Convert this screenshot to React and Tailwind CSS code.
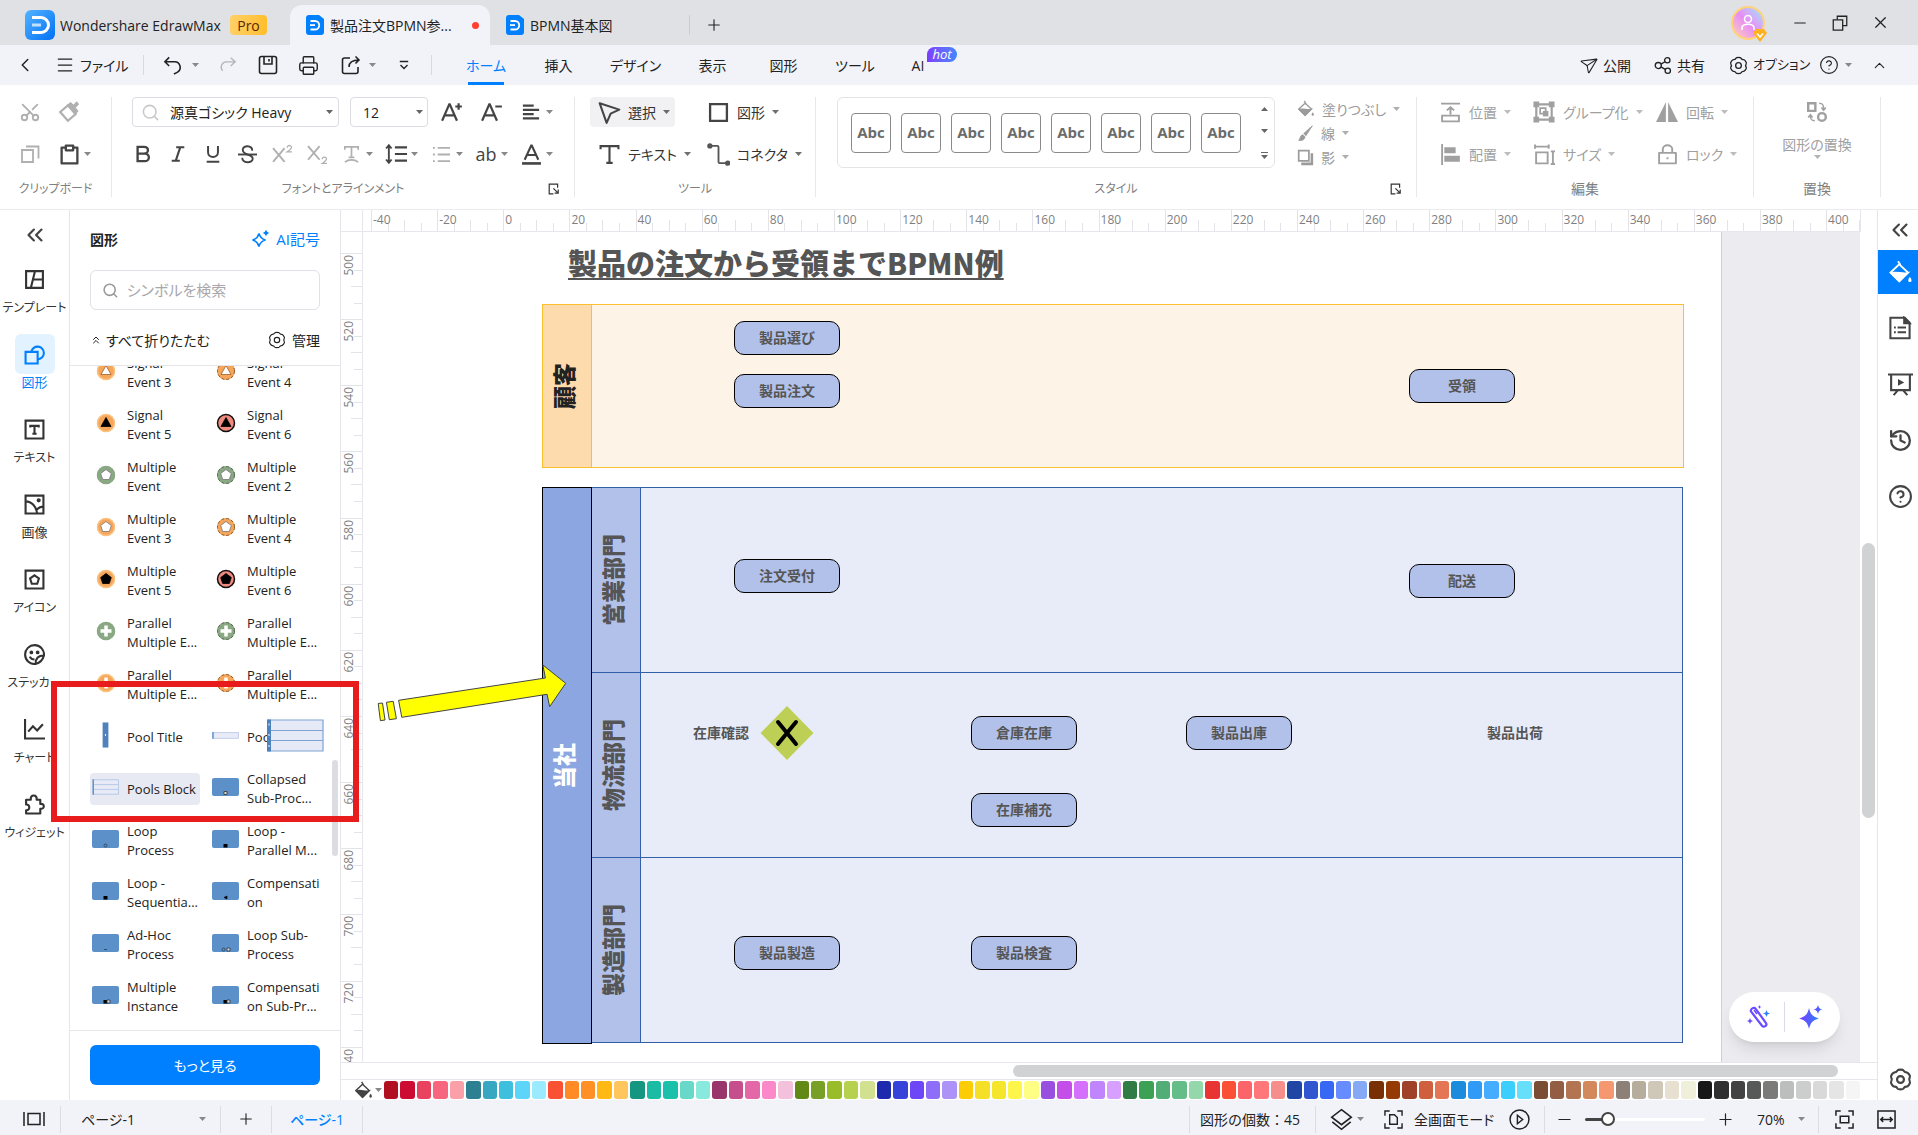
import React, { useState } from 'react';
import {
  Scissors,
  Undo2,
  Printer,
  Search,
  ChevronLeft,
  ChevronUp,
  ChevronsLeft,
  ChevronsUp,
  Menu,
  Minus,
  Plus,
  X,
  Send,
  Lock,
  CircleHelp,
  History,
} from 'lucide-react';

const PALETTE = [
  '#b01020', '#cc0c33', '#e9425f', '#f8657f', '#fb9fa8', '#2d7f92', '#38a8c2', '#3dbfdd', '#5cd5f8', '#9aebff',
  '#fa5033', '#ff8a26', '#ff9026', '#ffb814', '#fec65c', '#149681', '#1cbba3', '#1bc0aa', '#68d8c9', '#88e9dc',
  '#99356a', '#c74e8d', '#e468a8', '#fb88c8', '#f3c1dc', '#628916', '#78a026', '#98bd28', '#b5d14d', '#d2e190',
  '#1e2aad', '#3543d8', '#6d46f8', '#8e6ef8', '#ad93f8', '#fccc05', '#f5e027', '#f5e52b', '#fdf54a', '#fefe85',
  '#9a50df', '#c44fe8', '#d470fc', '#c084fc', '#d8a0fe', '#2f7d45', '#3ca055', '#52ad77', '#65bd87', '#93d7ab',
  '#e93434', '#fa5033', '#fb6468', '#ff7779', '#f68f8c', '#1f45a5', '#3057cf', '#3768f5', '#668cff', '#86a9f5',
  '#782f04', '#963a04', '#a0422a', '#cf5f3d', '#e47655', '#1b8bdc', '#2f9bf7', '#45adff', '#3ccffd', '#66dffa',
  '#794e35', '#935d44', '#b37451', '#d3895c', '#f5986f', '#8c8077', '#b7ad9c', '#cfc7b7', '#e7e0d1', '#efefda',
  '#171717', '#2f302f', '#434343', '#575958', '#7b7b7a', '#bcbdbd', '#cccdcd', '#d9d9d9', '#e5e5e5', '#f5f5f5',
  '#ffffff',
];

const SYMBOLS = [
  { name: 'Signal\nEvent 3', tone: 'orange', mark: 'triangle' },
  { name: 'Signal\nEvent 4', tone: 'dashed', mark: 'triangle' },
  { name: 'Signal\nEvent 5', tone: 'orange', mark: 'triangle', solid: true },
  { name: 'Signal\nEvent 6', tone: 'red', mark: 'triangle', solid: true },
  { name: 'Multiple\nEvent', tone: 'green', mark: 'pentagon' },
  { name: 'Multiple\nEvent 2', tone: 'greenDashed', mark: 'pentagon' },
  { name: 'Multiple\nEvent 3', tone: 'orange', mark: 'pentagon' },
  { name: 'Multiple\nEvent 4', tone: 'dashed', mark: 'pentagon' },
  { name: 'Multiple\nEvent 5', tone: 'orange', mark: 'pentagon', solid: true },
  { name: 'Multiple\nEvent 6', tone: 'red', mark: 'pentagon', solid: true },
  { name: 'Parallel\nMultiple E...', tone: 'green', mark: 'plus' },
  { name: 'Parallel\nMultiple E...', tone: 'greenDashed', mark: 'plus' },
  { name: 'Parallel\nMultiple E...', tone: 'orange', mark: 'plus' },
  { name: 'Parallel\nMultiple E...', tone: 'dashed', mark: 'plus' },
  { name: 'Pool Title', pool: 'title' },
  { name: 'Pool', pool: 'bar' },
  { name: 'Pools Block', pool: 'block', active: true },
  { name: 'Collapsed\nSub-Proc...', process: 'sub' },
  { name: 'Loop\nProcess', process: 'loop' },
  { name: 'Loop -\nParallel M...', process: 'square' },
  { name: 'Loop -\nSequentia...', process: 'square' },
  { name: 'Compensation', process: 'rewind' },
  { name: 'Ad-Hoc\nProcess', process: 'dash' },
  { name: 'Loop Sub-\nProcess', process: 'loopSub' },
  { name: 'Multiple\nInstance', process: 'squareSub' },
  { name: 'Compensation Sub-Pr...', process: 'squareSub' },
];

const TASKS = [
  { text: '製品選び', x: 371, y: 89 },
  { text: '製品注文', x: 371, y: 142 },
  { text: '受領', x: 1046, y: 137 },
  { text: '注文受付', x: 371, y: 327 },
  { text: '配送', x: 1046, y: 332 },
  { text: '倉庫在庫', x: 608, y: 484 },
  { text: '製品出庫', x: 823, y: 484 },
  { text: '在庫補充', x: 608, y: 561 },
  { text: '製品製造', x: 371, y: 704 },
  { text: '製品検査', x: 608, y: 704 },
];

const NOTES = [
  { text: '在庫確認', x: 330, y: 490 },
  { text: '製品出荷', x: 1124, y: 490 },
];

const LANES = ['営業部門', '物流部門', '製造部門'];

// 20目盛り分の幅(px)
const RULER_STEP = 66.15;
const H_MARKS = Array.from({ length: 23 }, (_, i) => -40 + i * 20);
const V_MARKS = Array.from({ length: 13 }, (_, i) => 500 + i * 20);

const Svg = ({ size = 20, sw = 1.6, className = '', children }) => (
  <svg
    width={size}
    height={size}
    viewBox="0 0 20 20"
    fill="none"
    stroke="currentColor"
    strokeWidth={sw}
    className={`shrink-0 ${className}`}
    aria-hidden="true"
  >
    {children}
  </svg>
);

const Caret = ({ up = false, className = 'text-[#888]' }) => (
  <svg width="7" height="4" viewBox="0 0 7 4" fill="currentColor" className={`shrink-0 ${className}`} aria-hidden="true">
    <path d={up ? 'M0 4h7L3.5 0z' : 'M0 0h7L3.5 4z'} />
  </svg>
);

const GearIcon = ({ size = 20, sw = 1.5 }) => (
  <Svg size={size} sw={sw}>
    <path d="M7.4 2.2c.6-1 4.6-1 5.2 0 .7 1.3 1 1.6 2.5 1.6 1.6 0 3.8 3.4 3 4.4-.9 1.3-.9 2.3 0 3.6.8 1-1.4 4.4-3 4.4-1.5 0-1.800.3-2.5 1.6-.6 1-4.600 1-5.200 0-.7-1.300-1-1.600-2.500-1.600-1.600 0-3.800-3.400-3-4.400.9-1.300.9-2.300 0-3.600-.8-1 1.400-4.400 3-4.400 1.500 0 1.800-.3 2.500-1.600z" />
    <circle cx="10" cy="10" r="3" />
  </Svg>
);

const BucketIcon = ({ size = 20 }) => (
  <Svg size={size} sw={1.5}>
    <path d="M8 1l2 3M9 3.5l7 6.5-7 7-7-7z" />
    <path d="M2.5 10.5c4-1.5 9 1 13 0L9 17z" fill="currentColor" />
    <path d="M17.5 13.5c2 2.5 1.5 4 0 4s-2-1.5 0-4z" fill="currentColor" stroke="none" />
  </Svg>
);

const ShareNodesIcon = () => (
  <Svg size={19} sw={1.4}>
    <circle cx="4.5" cy="10" r="3.2" />
    <circle cx="14" cy="4.5" r="2.8" />
    <circle cx="14.5" cy="15.5" r="2.8" />
    <path d="M7.3 8.5l4.2-2.5M7.3 11.5l4.5 2.6" />
  </Svg>
);

const DocLogo = () => (
  <svg width="18" height="20" viewBox="0 0 18 20" className="shrink-0" aria-hidden="true">
    <path d="M3 0h10l5 4v13a3 3 0 0 1-3 3H3a3 3 0 0 1-3-3V3a3 3 0 0 1 3-3z" fill="#0080ff" />
    <path d="M4.5 6h4.5a4 4 0 0 1 0 8.5H4.5M4 10.2h5" fill="none" stroke="#fff" strokeWidth="1.8" />
  </svg>
);

const AppLogo = () => (
  <svg width="30" height="30" viewBox="0 0 30 30" className="shrink-0" aria-hidden="true">
    <defs>
      <linearGradient id="logo" x1="0" y1="0" x2="1" y2="1">
        <stop offset="0" stopColor="#55b4ff" />
        <stop offset="1" stopColor="#0070f5" />
      </linearGradient>
    </defs>
    <rect width="30" height="30" rx="6" fill="url(#logo)" />
    <path d="M7 7.5h9a7.5 7.5 0 0 1 0 15H7" fill="none" stroke="#fff" strokeWidth="3" />
    <path d="M7 15h9" fill="none" stroke="#bfe0ff" strokeWidth="3" />
  </svg>
);

const TitleBar = () => (
  <header className="flex h-[45px] shrink-0 items-end bg-[#e0e1e5]">
    <div className="flex h-[45px] w-[290px] items-center pt-[5px] pl-[25px]">
      <AppLogo />
      <span className="ml-[5px] w-[170px] text-[14px] whitespace-nowrap">Wondershare EdrawMax</span>
      <span className="flex h-5 w-[37px] items-center justify-center rounded bg-gradient-to-r from-[#ffd066] to-[#ffbf28] text-[14px] font-medium text-[#5a2500]">
        Pro
      </span>
    </div>
    <button className="flex h-10 w-[200px] items-center rounded-t-xl bg-[#f2f3f9] pl-4">
      <DocLogo />
      <span className="ml-[6px] w-[142px] text-left text-[14px] whitespace-nowrap">製品注文BPMN参...</span>
      <span className="size-[7px] rounded-full bg-[#ff4030]" />
    </button>
    <button className="flex h-10 w-[199px] items-center pl-4">
      <DocLogo />
      <span className="ml-[6px] text-[14px]">BPMN基本図</span>
    </button>
    <span className="mb-[10px] h-5 w-px bg-[#cccdd2]" />
    <button aria-label="新規タブ" className="flex h-10 w-12 items-center justify-center">
      <Plus size={18} strokeWidth={1.5} />
    </button>
    <div className="ml-auto flex h-[45px] items-center pr-[18px]">
      <button aria-label="アカウント" className="relative mr-[15px] size-[34px] rounded-full border-2 border-[#ffd37a] bg-gradient-to-tr from-[#ffd0b0] via-[#e78bf5] to-[#8de4fa]">
        <svg viewBox="0 0 30 30" fill="none" stroke="#fff" strokeWidth="1.6" aria-hidden="true">
          <circle cx="15" cy="11" r="3.5" />
          <path d="M9 22v-2c0-5 12-5 12 0v2" />
        </svg>
        <svg width="14" height="14" viewBox="0 0 14 14" className="absolute -right-1 -bottom-1" aria-hidden="true">
          <path d="M3 1h8l3 4-7 9L0 5z" fill="#ffb21e" />
          <path d="M4 5.5l3 3.5 3-3.5" stroke="#fff" strokeWidth="1.5" fill="none" />
        </svg>
      </button>
      <button aria-label="最小化" className="flex w-10 justify-center"><Minus size={18} strokeWidth={1.5} /></button>
      <button aria-label="元に戻す(縮小)" className="flex w-10 justify-center">
        <Svg size={18} sw={1.4}>
          <path d="M7 6V2.5h10.500V13H13" />
          <path d="M2.5 6.5H13V18H2.5z" />
        </Svg>
      </button>
      <button aria-label="閉じる" className="flex w-10 justify-center"><X size={19} strokeWidth={1.5} /></button>
    </div>
  </header>
);

const MENUS = [
  { label: 'ホーム', width: 'w-[74px]' },
  { label: '挿入', width: 'w-[71px]' },
  { label: 'デザイン', width: 'w-[83px]' },
  { label: '表示', width: 'w-[71px]' },
  { label: '図形', width: 'w-[71px]' },
  { label: 'ツール', width: 'w-[72px]' },
  { label: 'AI', width: 'w-[54px]' },
];

const MenuBar = () => {
  const [current, setCurrent] = useState('ホーム');

  return (
    <nav className="flex h-10 shrink-0 items-center bg-[#f2f3f9] text-[14px]">
      <button aria-label="戻る" className="flex w-[49px] justify-center"><ChevronLeft size={22} strokeWidth={1.6} /></button>
      <button className="flex w-[94px] items-center gap-[5px] pl-[6px]">
        <Menu size={20} strokeWidth={1.5} />
        ファイル
      </button>
      <span className="h-5 w-px bg-[#d8d9de]" />
      <button aria-label="元に戻す" className="flex w-[64px] items-center justify-center gap-[10px] pl-[10px]">
        <Svg size={19} sw={1.7}><path d="M6.5 1.5L2 6l4.500 4.500M2 6h10a6 6 0 0 1 2.500 11.500l-3 1.500" /></Svg>
        <Caret />
      </button>
      <button aria-label="やり直し" className="flex w-10 justify-center text-[#b5b5b8]">
        <Svg size={18} sw={1.5}><path d="M13 2l5 4.5L13 11M18 6.500H8a6 6 0 0 0-4 10" /></Svg>
      </button>
      <button aria-label="保存" className="flex w-10 justify-center">
        <Svg><path d="M1.5 3.5q0-2 2-2h13q2 0 2 2v13q0 2-2 2h-13q-2 0-2-2zM6 1.5V9h8V1.5M11 4v2.5" /></Svg>
      </button>
      <button aria-label="印刷" className="flex w-10 justify-center"><Printer size={21} strokeWidth={1.6} /></button>
      <button aria-label="エクスポート" className="flex w-[52px] items-center justify-end gap-2 pr-1">
        <Svg><path d="M9 3H3.5q-2 0-2 2v11.500q0 2 2 2H15q2 0 2-2V12M8 12c0-5 3-7 10-7M14.500 1.500L18 5l-3.500 3.500" /></Svg>
        <Caret />
      </button>
      <button aria-label="クイックアクセス" className="flex w-[47px] justify-center">
        <Svg size={14} sw={2}><path d="M4 5h12M5 10l5 5 5-5" /></Svg>
      </button>
      <span className="ml-1 h-5 w-px bg-[#d8d9de]" />
      <div className="flex h-10 pl-[17px]">
        {MENUS.map(({ label, width }) => (
          <button
            key={label}
            onClick={() => setCurrent(label)}
            className={`relative flex h-10 items-center justify-center ${width} ${label === current ? 'text-[#0080ff]' : ''}`}
          >
            {label}
            {label === current && <span className="absolute bottom-0 h-[3px] w-9 bg-[#0080ff]" />}
            {label === 'AI' && (
              <span className="absolute top-[2px] left-[36px] flex h-[15px] w-[30px] items-center justify-center rounded-t-lg rounded-br-lg bg-gradient-to-r from-[#7a3cff] to-[#3f86ff] text-[13px] text-white italic">
                hot
              </span>
            )}
          </button>
        ))}
      </div>
      <div className="ml-auto flex items-center pr-[30px]">
        <button className="flex w-[75px] items-center gap-[6px]"><Send size={18} strokeWidth={1.4} className="rotate-12" />公開</button>
        <button className="flex w-[75px] items-center gap-1"><ShareNodesIcon />共有</button>
        <button className="flex w-[90px] items-center gap-[5px] text-[13px] whitespace-nowrap"><GearIcon size={19} sw={1.4} />オプション</button>
        <button aria-label="ヘルプ" className="flex w-[52px] items-center gap-[6px]"><CircleHelp size={20} strokeWidth={1.4} /><Caret /></button>
        <button aria-label="リボンを折りたたむ"><ChevronUp size={17} strokeWidth={1.6} /></button>
      </div>
    </nav>
  );
};

const Group = ({ label, width, small = false, launcher = false, children }) => (
  <section className={`relative flex h-[100px] shrink-0 flex-col border-r border-[#e8e8ea] ${width}`}>
    {children}
    <h2 className={`mt-auto text-center leading-4 text-[#7f7f7f] ${small ? 'text-[12px]' : 'text-[14px]'}`}>{label}</h2>
    {launcher && (
      <button aria-label={`${label}の設定`} className="absolute right-[14px] bottom-[2px]">
        <Svg size={12} sw={2}><path d="M9 18H2V2h14v6M9 9l8 8M17 11v6h-6" /></Svg>
      </button>
    )}
  </section>
);

const RibbonButton = ({ icon, label, className = '' }) => (
  <button className={`flex h-[30px] shrink-0 items-center whitespace-nowrap ${className}`}>
    <span className="mr-2 flex w-[22px] shrink-0 justify-center">{icon}</span>
    {label}
    <Caret className="ml-[7px] opacity-70" />
  </button>
);

const IconCaret = ({ title, className = 'w-[45px]', children }) => (
  <button aria-label={title} className={`flex h-[30px] items-center justify-end gap-1 ${className}`}>
    <span className="flex w-[22px] shrink-0 justify-center">{children}</span>
    <Caret />
  </button>
);

const PlainIcon = ({ title, className = '', children }) => (
  <button aria-label={title} className={`flex h-[30px] w-[35px] items-center justify-center ${className}`}>
    {children}
  </button>
);

const Ribbon = () => (
  <div className="flex h-[125px] shrink-0 border-b border-[#ebebee] bg-white py-3 text-[14px] text-[#333]">
    <Group label="クリップボード" width="w-[112px]" small>
      <div className="flex pl-[12px] text-[#b0b0b0]">
        <PlainIcon title="切り取り"><Scissors size={22} strokeWidth={2} className="-rotate-90" /></PlainIcon>
        <PlainIcon title="書式のコピー" className="ml-1">
          <Svg size={22} sw={2}><path d="M2 10l7-6 7 8-7 6z" /><path d="M9 3.5L16.500 11l1.500-2-2.500-3 3-3L17 1l-3 3-2.500-2.500z" fill="currentColor" strokeWidth="1" /></Svg>
        </PlainIcon>
      </div>
      <div className="mt-3 flex pl-[12px]">
        <PlainIcon title="コピー" className="text-[#b0b0b0]">
          <Svg sw={1.8}><path d="M2 6h11v12H2zM6 2.5h12.500v12" /></Svg>
        </PlainIcon>
        <IconCaret title="貼り付け" className="w-[44px] text-[#444]">
          <Svg size={21} sw={2.2}><path d="M6 3.5H2.5v15h15v-15H14M6.500 1.500h7v4.500h-7z" strokeLinejoin="round" /></Svg>
        </IconCaret>
      </div>
    </Group>

    <Group label="フォントとアラインメント" width="w-[463px]" small launcher>
      <div className="flex pl-5 text-[#444]">
        <label className="flex h-[30px] w-[207px] items-center rounded border border-[#dcdde2] pl-2">
          <Search size={19} strokeWidth={2} className="text-[#c8c8c8]" />
          <select aria-label="フォント" className="ml-[10px] w-[156px] appearance-none bg-transparent text-[#222] outline-none">
            <option>源真ゴシック Heavy</option>
          </select>
          <Caret className="text-[#666]" />
        </label>
        <label className="ml-[11px] flex h-[30px] w-[78px] items-center rounded border border-[#dcdde2] pl-3">
          <select aria-label="フォントサイズ" className="w-[53px] appearance-none bg-transparent text-[#222] outline-none">
            <option>12</option>
          </select>
          <Caret className="text-[#666]" />
        </label>
        <button aria-label="フォントの拡大" className="ml-1 flex w-10 items-center justify-center">
          <Svg size={22} sw={2}><path d="M1 18L7.5 3h.5l6.500 15M3.500 13h8.500M13 5h6M16 2v6" /></Svg>
        </button>
        <button aria-label="フォントの縮小" className="flex w-10 items-center justify-center">
          <Svg size={22} sw={2}><path d="M1 18L7.500 3h.5l6.500 15M3.500 13h8.500M13 5h6" /></Svg>
        </button>
        <IconCaret title="配置" className="w-[41px]"><Svg size={18} sw={2.4}><path d="M1 3h12M1 7.700h18M1 12.400h12M1 17h18" /></Svg></IconCaret>
      </div>
      <div className="mt-3 flex pl-[13px] text-[#444]">
        <PlainIcon title="太字"><Svg size={18} sw={2.6}><path d="M4 2h7c6 0 6 7.500 0 7.500H4zM4 9.500h8c6 0 6 8.500 0 8.500H4z" /></Svg></PlainIcon>
        <PlainIcon title="斜体"><Svg size={18} sw={2.4}><path d="M8 2.500h9M3 17.500h9M12.500 2.500l-5 15" /></Svg></PlainIcon>
        <PlainIcon title="下線"><Svg size={18} sw={2.2}><path d="M4.500 1v7c0 7 11 7 11 0V1M3 18.500h14" /></Svg></PlainIcon>
        <PlainIcon title="取り消し線"><Svg size={19} sw={2}><path d="M15 6c0-6-10-6-10-1 0 2.500 2 4 5 5 4 1 5.500 2.500 5.500 4.500 0 5-11 5-11-1" /><path d="M0 10h20" /></Svg></PlainIcon>
        <PlainIcon title="上付き" className="text-[#b0b0b0]"><Svg size={21} sw={1.8}><path d="M1 4l11 13M12 4L1 17" /><path d="M14.500 3.500c0-3 4.500-2.500 4 0-.3 1.500-4 4-4 4h4.500" strokeWidth="1.2" /></Svg></PlainIcon>
        <PlainIcon title="下付き" className="text-[#b0b0b0]"><Svg size={21} sw={1.8}><path d="M1 2l11 13M12 2L1 15" /><path d="M14.500 14.500c0-3 4.500-2.500 4 0-.3 1.500-4 4-4 4h4.500" strokeWidth="1.2" /></Svg></PlainIcon>
        <IconCaret title="文字の効果" className="w-[38px] text-[#b0b0b0]"><Svg size={19} sw={1.8}><path d="M3 5V2h14v3M10 2v11M7 13h6M3 18c4-3 10-3 14 0" /></Svg></IconCaret>
        <IconCaret title="行間"><Svg size={22} sw={2}><path d="M3.500 2v16M1 5l2.500-3L6 5M1 15l2.500 3L6 15" strokeWidth="1.7" /><path d="M9 4h11M9 10h11M9 16h11" /></Svg></IconCaret>
        <IconCaret title="箇条書き" className="w-[45px] text-[#b0b0b0]"><Svg size={19} sw={2}><path d="M1 3h2M1 10h2M1 17h2M6 3h13M6 10h13M6 17h13" /></Svg></IconCaret>
        <IconCaret title="文字ケース"><span className="text-[18px] leading-none font-medium">ab</span></IconCaret>
        <IconCaret title="フォントの色"><Svg size={21} sw={2}><path d="M3.500 15L9.700 1.500h.6L16.500 15M6 10.500h8" /><path d="M1 18.500h18" strokeWidth="2.5" /></Svg></IconCaret>
      </div>
    </Group>

    <Group label="ツール" width="w-[241px]" small>
      <div className="flex pl-[15px]">
        <RibbonButton
          className="w-[85px] rounded bg-[#f1f1f3] pl-[8px]"
          label="選択"
          icon={<Svg size={23} sw={1.8} className="text-[#444]"><path d="M1.500 2l17 5.500-7.500 3.500-3.500 8z" strokeLinejoin="round" /></Svg>}
        />
        <RibbonButton
          className="ml-[32px]"
          label="図形"
          icon={<Svg size={21} sw={2.2} className="text-[#444]"><path d="M2 2h16v16H2z" /></Svg>}
        />
      </div>
      <div className="mt-3 flex pl-[23px]">
        <RibbonButton
          className="w-[109px]"
          label="テキスト"
          icon={<Svg size={21} sw={2} className="text-[#444]"><path d="M1.500 5V2h17v3M10 2v16M7 18h6" /></Svg>}
        />
        <RibbonButton
          label="コネクタ"
          icon={
            <Svg size={23} sw={1.6} className="text-[#555]">
              <path d="M3 2.500h6q1 0 1 1v13q0 1 1 1h6" />
              <circle cx="2.5" cy="2.5" r="1.5" fill="currentColor" />
              <circle cx="18" cy="17.5" r="1.5" fill="currentColor" />
            </Svg>
          }
        />
      </div>
    </Group>

    <Group label="スタイル" width="w-[601px]" small launcher>
      <div className="flex pl-[21px]">
        <div className="flex h-[71px] w-[438px] items-center rounded-md border border-[#e3e4e8] pl-[13px]">
          <div className="flex gap-[10px]">
            {Array.from({ length: 8 }, (_, i) => (
              <button key={i} className="size-10 rounded border border-[#8a8a8a] text-[15px] font-bold text-[#6b6b6b]">
                Abc
              </button>
            ))}
          </div>
          <div className="ml-auto flex h-[60px] w-[20px] flex-col items-center justify-between py-1">
            <button aria-label="前のスタイル"><Caret up className="text-[#666]" /></button>
            <button aria-label="次のスタイル"><Caret className="text-[#666]" /></button>
            <button aria-label="すべてのスタイル" className="flex flex-col items-center gap-[2px]">
              <span className="h-px w-[7px] bg-[#666]" />
              <Caret className="text-[#666]" />
            </button>
          </div>
        </div>
        <div className="ml-[22px] flex flex-col text-[#9b9b9b]">
          <button className="flex h-6 items-center gap-[7px]"><BucketIcon size={18} />塗りつぶし<Caret className="opacity-80" /></button>
          <button className="flex h-6 items-center gap-[7px]">
            <Svg size={17} sw={1}><path d="M18 1L8 10l2.500 2.500zM7 11.500l2.500 2.500c-1 4-5 5-7.500 4 2-1.500 1.500-6 5-6.500z" fill="currentColor" /></Svg>
            線<Caret className="opacity-80" />
          </button>
          <button className="flex h-6 items-center gap-[7px]">
            <Svg size={17} sw={2}><path d="M2 2h12v12H2z" /><path d="M17.500 5v12.500H5" strokeWidth="3" /></Svg>
            影<Caret className="opacity-80" />
          </button>
        </div>
      </div>
    </Group>

    <Group label="編集" width="w-[337px]">
      <div className="flex pl-[22px] text-[#a0a0a0]">
        <RibbonButton className="w-[94px]" label="位置" icon={<Svg size={21} sw={1.8}><path d="M1 1.500h18M10 12V5.500M6.500 8L10 5l3.500 3M2 13h16v5.500H2z" /></Svg>} />
        <RibbonButton className="w-[123px]" label="グループ化" icon={<Svg size={22} sw={2}><path d="M3 3h14v14H3z" /><path d="M1 1h4v4H1zM15 1h4v4h-4zM1 15h4v4H1zM15 15h4v4h-4z" strokeWidth="1.2" fill="currentColor" /><path d="M6.500 6.500h5v5h-5z" strokeWidth="1.6" /><path d="M9 9h5v5H9z" fill="currentColor" strokeWidth="0" /></Svg>} />
        <RibbonButton label="回転" icon={<Svg size={22} sw={0}><path d="M9 1v18H0z" fill="currentColor" /><path d="M11 1v18h9z" fill="currentColor" /></Svg>} />
      </div>
      <div className="mt-3 flex pl-[22px] text-[#a0a0a0]">
        <RibbonButton className="w-[94px]" label="配置" icon={<Svg size={21} sw={1.8}><path d="M2 0v20" /><path d="M5 4h9v4H5zM5 12h13v4H5z" fill="currentColor" /></Svg>} />
        <RibbonButton className="w-[123px]" label="サイズ" icon={<Svg size={21} sw={1.8}><path d="M1 2.500h13M1 .5v4M14 .5v4M2 8h11v10.500H2zM18 7v12M16 7h4M16 19h4" /></Svg>} />
        <RibbonButton
          label="ロック"
          icon={<Svg size={21} sw={1.8}><path d="M2 8.500h16v10H2zM5.500 8.500V5a4.500 3.800 0 0 1 9 0v3.500M10 12.500v2" strokeLinejoin="round" /></Svg>}
        />
      </div>
    </Group>

    <Group label="置換" width="w-[127px]">
      <button className="flex flex-col items-center pt-1 text-[#a0a0a0]">
        <Svg size={22} sw={2.2}>
          <path d="M2 2h6.500v7H2z" />
          <circle cx="14.5" cy="14.5" r="3.5" />
          <path d="M12 2c3 0 4 1 4 5M14 6l2 2.500L18 6M8 18c-3 0-4-1-4-4.500M2 15l2-2.500L6 15" strokeWidth="1.4" />
        </Svg>
        <span className="mt-3 leading-5">図形の置換</span>
        <Caret className="opacity-80" />
      </button>
    </Group>
  </div>
);

const RAIL = [
  { label: 'テンプレート', icon: <path d="M2 2h16v16H2zM10.500 2L6.500 18M9 10h9" /> },
  { label: '図形', active: true, kanji: true, icon: <><path d="M1.500 7.500h11.500V18.500H1.500z" /><path d="M7 7.500a6 6 0 1 1 6 7" /></> },
  { label: 'テキスト', icon: <><path d="M1.500 1.500h17v17h-17z" /><path d="M6 8V6.500h8V8M10 6.500v7.500M8 14h4" /></> },
  { label: '画像', kanji: true, icon: <><path d="M1.500 1.500h17v17h-17zM1.500 7c6 0 10 5 11 11.500M18.500 12c-3 0-5 1.500-6.500 3" /><circle cx="14" cy="6" r="1" fill="currentColor" /></> },
  { label: 'アイコン', icon: <><path d="M1.500 1.500h17v17h-17z" /><path d="M10 6l4.200 3-1.600 5H7.400L5.800 9z" /></> },
  {
    label: 'ステッカー',
    icon: (
      <>
        <path d="M19 11a9 9 0 1 0-8 8c0-5 3-8 8-8zM19 11c-1 4-4 7-8 8" strokeLinejoin="round" />
        <path d="M5.500 12c1 2 2.500 2.800 4.500 2.800" />
        <circle cx="7" cy="8" r=".8" fill="currentColor" />
        <circle cx="13" cy="8" r=".8" fill="currentColor" />
      </>
    ),
  },
  { label: 'チャート', icon: <path d="M1 0v18.500h19M4 12l4.500-5 4 4L18 5" /> },
  { label: 'ウィジェット', icon: <path d="M2 5.500h4.500c-1-5.500 6.500-5.500 5.500 0h3.500v4c4.500-1 4.500 5.500 0 4.500v4.500H2v-3c4 .5 4-6 0-5.500z" strokeLinejoin="round" /> },
];

const LeftRail = () => (
  <aside className="flex w-[70px] shrink-0 flex-col items-center border-r border-[#e6e6ea] bg-white pt-[11px]">
    <button aria-label="折りたたむ" className="flex h-[28px] items-center text-[#444]"><ChevronsLeft size={26} strokeWidth={2} /></button>
    {RAIL.map(({ label, icon, active, kanji }) => (
      <button key={label} className={`flex h-[75px] w-[68px] flex-col items-center pt-[10px] ${active ? 'text-[#0080ff]' : 'text-[#333]'}`}>
        <span className={`flex size-10 shrink-0 items-center justify-center rounded-md ${active ? 'bg-[#e2f2ff]' : ''}`}>
          <Svg size={21} sw={2}>{icon}</Svg>
        </span>
        <span className={`leading-[17px] whitespace-nowrap ${kanji ? 'text-[13px]' : 'text-[12px]'}`}>{label}</span>
      </button>
    ))}
  </aside>
);

const TONES = {
  orange: { fill: '#f5a65b', ring: '#fbc27e' },
  dashed: { fill: '#f5a65b', ring: '#8a5a28', dash: '3 2' },
  red: { fill: '#f08a80', ring: '#111' },
  green: { fill: '#8aa884', ring: '#8aa884' },
  greenDashed: { fill: '#8aa884', ring: '#52684e', dash: '3 2' },
};

const EventIcon = ({ tone, mark, solid }) => {
  const { fill, ring, dash } = TONES[tone];
  const markFill = solid ? '#000' : '#fff';
  return (
    <svg width="20" height="20" viewBox="0 0 20 20" aria-hidden="true">
      <circle cx="10" cy="10" r="9" fill={fill} />
      <circle cx="10" cy="10" r="8.500" fill="none" stroke={ring} strokeWidth={dash ? 1 : 1.5} strokeDasharray={dash} />
      {mark === 'triangle' && <path d="M10 4.500l5 9H5z" fill={markFill} stroke={solid ? '#000' : '#a0602a'} strokeWidth=".8" />}
      {mark === 'pentagon' && <path d="M10 4.500l5.300 4-2 6H6.700l-2-6z" fill={markFill} stroke={solid ? '#000' : '#777'} strokeWidth=".8" />}
      {mark === 'plus' && <path d="M10 4.500v11M4.500 10h11" stroke="#fff" strokeWidth="3.500" />}
    </svg>
  );
};

const PoolIcon = ({ pool }) => (
  <svg width="28" height="28" viewBox="0 0 28 28" aria-hidden="true">
    {pool === 'title' && <path d="M11 1h6v26h-6z" fill="#4d82bd" />}
    {pool === 'title' && <path d="M13.500 13h1v2h-1z" fill="#fff" />}
    {pool === 'bar' && <path d="M.5 11.500h27v6H.5z" fill="#e8ebf7" stroke="#c3cdea" />}
    {pool === 'bar' && <path d="M0 11h2v7H0z" fill="#7ba5d6" />}
    {pool === 'block' && <path d="M1.500 6.500h26v15h-26zM2 11.500h25M2 16.500h25" fill="#e8ebf7" stroke="#b4c8e6" />}
    {pool === 'block' && <path d="M.5 6h1.500v16H.5z" fill="#5b8fc9" />}
  </svg>
);

const ProcessIcon = ({ process }) => (
  <svg width="27" height="18" viewBox="0 0 27 18" aria-hidden="true">
    <rect width="27" height="18" rx="2" fill="#5b90c9" />
    {process === 'sub' && <path d="M12 13.500h3v3h-3z" fill="#ddd" stroke="#333" strokeWidth=".8" />}
    {process.startsWith('loop') && <circle cx={process === 'loop' ? 13.5 : 11.5} cy="15.500" r="1.500" fill="none" stroke="#2a3d55" strokeWidth=".8" />}
    {process.startsWith('square') && <path d="M11.500 14h4v3.500h-4z" fill="#000" />}
    {process.endsWith('Sub') && <path d="M15 14h3v3h-3z" fill="#ddd" stroke="#333" strokeWidth=".8" />}
    {process === 'rewind' && <path d="M12 15.500l3-1.500v3z" fill="#000" stroke="#000" strokeWidth=".6" />}
    {process === 'dash' && <path d="M12 15.500h3" stroke="#2a3d55" strokeWidth=".8" />}
  </svg>
);

const SymbolItem = ({ item }) => (
  <button className={`flex h-8 items-center rounded pl-[2px] text-left ${item.active ? 'bg-[#e7e9f3]' : ''}`}>
    <span className="flex w-[27px] shrink-0 justify-center pb-1">
      {item.mark && <EventIcon {...item} />}
      {item.pool && <PoolIcon pool={item.pool} />}
      {item.process && <ProcessIcon process={item.process} />}
    </span>
    <span className={`ml-2 w-[73px] text-[13px] leading-[19px] break-words ${item.active ? 'whitespace-nowrap' : 'whitespace-pre-line'}`}>
      {item.name}
    </span>
  </button>
);

const SymbolPanel = () => (
  <aside className="flex w-[271px] shrink-0 flex-col border-r border-[#e6e6ea] bg-white">
    <div className="shrink-0 border-b border-[#e6e6ea] px-5 pt-[18px]">
      <div className="flex h-[22px] items-center justify-between">
        <h2 className="text-[14px] font-bold">図形</h2>
        <button className="flex items-center gap-[6px] text-[15px] text-[#0080ff]">
          <Svg sw={1.5}>
            <path d="M9 4.500c1 4 2.500 5.500 6.500 6.500-4 1-5.500 2.500-6.500 6.500-1-4-2.500-5.500-6.500-6.500 4-1 5.500-2.500 6.500-6.500z" />
            <path d="M16 .5c.5 2 1.500 3 3.500 3.500-2 .5-3 1.500-3.500 3.500-.5-2-1.500-3-3.500-3.500 2-.5 3-1.500 3.500-3.500z" fill="currentColor" strokeWidth="0" />
          </Svg>
          AI記号
        </button>
      </div>
      <label className="mt-5 flex h-10 items-center rounded-md border border-[#e0e1e6] px-[11px] text-[#999]">
        <Search size={19} strokeWidth={2.2} />
        <input
          type="text"
          aria-label="シンボルを検索"
          placeholder="シンボルを検索"
          className="ml-2 w-full text-[15px] outline-none placeholder:text-[#a8a8ac]"
        />
      </label>
      <div className="flex h-[55px] items-center justify-between pt-[5px] text-[14px]">
        <button className="flex items-center gap-[4px]"><ChevronsUp size={12} strokeWidth={2} />すべて折りたたむ</button>
        <button className="flex items-center gap-[6px]"><GearIcon size={18} sw={1.3} />管理</button>
      </div>
    </div>
    <div className="relative min-h-0 flex-1 overflow-hidden">
      <div className="-mt-[19px] grid grid-cols-2 gap-x-[10px] gap-y-5 px-5 pt-[10px]">
        {SYMBOLS.map((item, i) => (
          <SymbolItem key={i} item={item} />
        ))}
      </div>
      <span className="absolute top-[394px] right-[2px] h-[96px] w-[6px] rounded-full bg-[#dcdde0]" />
    </div>
    <div className="shrink-0 border-t border-[#e6e6ea] px-5 pt-[14px] pb-[15px]">
      <button className="h-10 w-full rounded-md bg-[#0080ff] text-[14px] text-white">もっと見る</button>
    </div>
  </aside>
);

const Task = ({ task }) => (
  <div
    style={{ left: task.x, top: task.y }}
    className="absolute flex h-[34px] w-[106px] items-center justify-center rounded-[10px] border border-black bg-[#b2c1ea] pb-[2px] text-[14px] font-bold text-[#555]"
  >
    {task.text}
  </div>
);

const SideText = ({ className = '', children }) => (
  <span className={`mr-2 rotate-180 text-[23px] leading-none font-black [text-orientation:sideways] [writing-mode:vertical-rl] ${className}`}>
    {children}
  </span>
);

const Canvas = () => (
  <div className="relative min-w-0 flex-1 overflow-hidden bg-[#ebebf0] font-['Noto_Sans_CJK_JP',sans-serif] [font-feature-settings:normal]">
    <div className="relative h-full w-[1359px] border-r border-[#cfcfd3] bg-white">
      <h1 className="absolute top-[10px] left-[205px] text-[29px] leading-[40px] font-black whitespace-nowrap text-[#555] underline decoration-2 underline-offset-[3px]">
        製品の注文から受領までBPMN例
      </h1>
      <div className="absolute top-[72px] left-[179px] flex h-[164px] w-[1142px] border border-[#fcc02e] bg-[#fef3e7]">
        <div className="flex w-[49px] items-center justify-center border-r border-[#fcc02e] bg-[#fddbac]">
          <SideText className="text-[#222]">顧客</SideText>
        </div>
      </div>
      <div className="absolute top-[255px] left-[179px] flex h-[557px] w-[1141px]">
        <div className="flex w-[50px] items-center justify-center border border-black bg-[#8ba6e0]">
          <SideText className="text-white">当社</SideText>
        </div>
        <div className="mb-px flex flex-1 flex-col border-t border-r border-[#3260a8] bg-[#e8ecf8]">
          {LANES.map((lane) => (
            <div key={lane} className="flex flex-1 border-b border-[#3260a8]">
              <div className="flex w-[49px] items-center justify-center border-r border-[#3260a8] bg-[#b2c1ea]">
                <SideText className="text-[#555]">{lane}</SideText>
              </div>
            </div>
          ))}
        </div>
      </div>
      {TASKS.map((task) => (
        <Task key={task.text} task={task} />
      ))}
      {NOTES.map(({ text, x, y }) => (
        <span key={text} style={{ left: x, top: y }} className="absolute text-[14px] leading-5 font-bold text-[#555]">
          {text}
        </span>
      ))}
      <svg width="54" height="54" viewBox="0 0 54 54" className="absolute top-[474px] left-[397px]" aria-hidden="true">
        <path d="M27 0l26.500 27L27 54 .5 27z" fill="#becf55" />
        <path d="M18 16l18 22M36 16L18 38" stroke="#000" strokeWidth="4" strokeLinecap="round" />
      </svg>
    </div>
    <div className="absolute right-5 bottom-5 flex h-[50px] w-[111px] items-center rounded-full bg-white text-[#5a55ff] shadow-lg">
      <svg width="0" height="0" className="absolute" aria-hidden="true">
        <linearGradient id="ai" x1="0" y1="0" x2="1" y2="0">
          <stop offset="0" stopColor="#7a3cff" />
          <stop offset="1" stopColor="#2f80ff" />
        </linearGradient>
      </svg>
      <button aria-label="AI描画" className="flex flex-1 justify-center pl-1">
        <svg width="24" height="24" viewBox="0 0 24 24" fill="none" aria-hidden="true">
          <path d="M4 6.500c-1-2.500 3-5 4.700-2.700L19 18c1.500 2.500-2 5-4 2.700z" stroke="#6a4bff" strokeWidth="2.2" />
          <path d="M7 5l3 4" stroke="#6a4bff" strokeWidth="1.5" />
          <path d="M19.500 5l1 2.500 2.500 1-2.500 1-1 2.500-1-2.500-2.500-1 2.500-1z" fill="#2f80ff" />
          <path d="M12.500 0l.6 1.400 1.400.6-1.400.6-.6 1.400-.6-1.400-1.400-.6 1.400-.6zM3 13l.9 2.100 2.100.9-2.100.9L3 19l-.9-2.100L0 16l2.100-.9z" fill="#6a4bff" />
        </svg>
      </button>
      <span className="h-[30px] w-px bg-[#dcdce6]" />
      <button aria-label="AIアシスタント" className="flex flex-1 justify-center pr-1">
        <svg width="24" height="24" viewBox="0 0 24 24" fill="url(#ai)" aria-hidden="true">
          <path d="M10 3c1.500 6.500 3.500 8.500 10 10.500-6.500 2-8.500 4-10 10.500-1.500-6.500-3.500-8.500-10-10.500C6.500 11.500 8.500 9.500 10 3z" />
          <path d="M19 0c.8 3 1.500 3.700 4.500 4.500-3 .8-3.700 1.500-4.500 4.500-.8-3-1.500-3.700-4.500-4.500 3-.8 3.700-1.500 4.500-4.500z" />
        </svg>
      </button>
    </div>
  </div>
);

const HorizontalRuler = () => (
  <div className="flex h-[22px] min-w-0 flex-1 overflow-hidden border-r border-b border-[#e6e6ec] pl-2 text-[12px] text-[#7f7f7f]">
    {H_MARKS.map((mark) => (
      <div key={mark} style={{ width: RULER_STEP }} className="relative flex shrink-0 items-end">
        <span className="h-[21px] flex-1 border-l border-[#e3e3ea]" />
        <span className="h-2 flex-1 border-l border-[#e3e3ea]" />
        <span className="h-[11px] flex-1 border-l border-[#e3e3ea]" />
        <span className="h-2 flex-1 border-l border-[#e3e3ea]" />
        <span className="absolute top-[2px] left-[2px] leading-4">{mark}</span>
      </div>
    ))}
  </div>
);

const VerticalRuler = () => (
  <div className="flex w-[22px] shrink-0 flex-col overflow-hidden border-r border-[#e6e6ec] pt-[21px] text-[12px] text-[#7f7f7f]">
    {V_MARKS.map((mark) => (
      <div key={mark} style={{ height: RULER_STEP }} className="relative flex shrink-0 flex-col items-end">
        <span className="w-[21px] flex-1 border-t border-[#e3e3ea]" />
        <span className="w-2 flex-1 border-t border-[#e3e3ea]" />
        <span className="w-[11px] flex-1 border-t border-[#e3e3ea]" />
        <span className="w-2 flex-1 border-t border-[#e3e3ea]" />
        {/* 下端の目盛りは下2桁だけが見える */}
        <span className="absolute top-[2px] left-0 rotate-180 leading-4 [text-orientation:sideways] [writing-mode:vertical-rl]">
          {mark === 740 ? 40 : mark}
        </span>
      </div>
    ))}
  </div>
);

const Workspace = () => (
  <main className="flex min-w-0 flex-1 flex-col bg-white">
    <div className="flex shrink-0">
      <span className="h-[22px] w-[22px] shrink-0 border-r border-b border-[#e6e6ec]" />
      <HorizontalRuler />
      <span className="w-4 shrink-0" />
    </div>
    <div className="flex min-h-0 flex-1">
      <VerticalRuler />
      <Canvas />
      <div className="w-[17px] shrink-0 px-[2px] pt-[311px]">
        <div className="h-[275px] rounded-full bg-[#d1d2d4]" />
      </div>
    </div>
    <div className="h-[17px] shrink-0 border-t border-[#e6e6ec] py-[2px]">
      <div className="mr-[39px] ml-auto h-3 w-[825px] rounded-full bg-[#d1d2d4]" />
    </div>
    <div className="flex h-[21px] shrink-0 items-center border-t border-[#e6e6ec]">
      <button aria-label="塗りつぶし色" className="flex w-[43px] items-center gap-[2px] pl-[13px] text-[#444]"><BucketIcon size={19} /><Caret /></button>
      <div className="flex h-[18px] min-w-0 flex-1 gap-[2px]">
        {PALETTE.map((color, i) => (
          <button key={i} aria-label={color} style={{ backgroundColor: color }} className="flex-1 rounded-[3px]" />
        ))}
      </div>
    </div>
  </main>
);

const RightRail = () => (
  <aside className="flex w-[41px] shrink-0 flex-col items-center border-l border-[#e6e6ea] bg-white text-[#444]">
    <button aria-label="展開" className="flex h-10 items-center pl-1"><ChevronsLeft size={26} strokeWidth={2} /></button>
    <button aria-label="スタイル" className="flex h-11 w-full shrink-0 items-center justify-center bg-[#0080ff] pl-1 text-white"><BucketIcon size={25} /></button>
    <div className="flex flex-col items-center pt-[6px] pl-1">
      <button aria-label="プロパティ" className="flex h-14 items-center">
        <Svg size={24} sw={1.7}><path d="M2 1.500h12l4 4v13H2zM5 9.500h1.500M8 9.500h7M5 13.500h1.500M8 13.500h7" /><path d="M13.500 1.500v4.500H18z" fill="currentColor" /></Svg>
      </button>
      <button aria-label="プレゼンテーション" className="flex h-14 items-center">
        <Svg size={25} sw={1.7}><path d="M0 2h20M2.500 2v12.500h15V2M8 14.500l-3.500 4M12 14.500l3.500 4" /><path d="M8 5.500v5.500l5-2.700z" fill="currentColor" strokeWidth="0" /></Svg>
      </button>
      <button aria-label="履歴" className="flex h-14 items-center"><History size={25} strokeWidth={2.2} /></button>
      <button aria-label="ヘルプ" className="flex h-14 items-center"><CircleHelp size={25} strokeWidth={2} /></button>
    </div>
    <button aria-label="設定" className="mt-auto pb-[9px] pl-1"><GearIcon size={23} sw={1.9} /></button>
  </aside>
);

const Divider = () => <span className="h-[27px] w-px shrink-0 bg-[#dcdde2]" />;

const StatusBar = () => {
  const [zoom, setZoom] = useState(15);

  return (
    <footer className="flex h-[35px] shrink-0 items-center bg-[#f2f3f9] pt-[3px] text-[15px]">
      <button aria-label="サムネイル" className="flex w-[60px] justify-center pl-2">
        <svg width="22" height="14" viewBox="0 0 22 14" fill="none" stroke="currentColor" strokeWidth="1.5" aria-hidden="true">
          <path d="M1 0v14M21 0v14M5 1.500h12v11H5z" />
        </svg>
      </button>
      <Divider />
      <label className="flex w-[159px] items-center pl-5">
        <select aria-label="ページ" className="w-[118px] appearance-none bg-transparent text-[14px] outline-none">
          <option>ページ-1</option>
        </select>
        <Caret />
      </label>
      <Divider />
      <button aria-label="ページを追加" className="flex w-[50px] justify-center"><Plus size={18} strokeWidth={1.5} /></button>
      <Divider />
      <button className="w-[90px] text-[14px] font-medium text-[#0080ff]">ページ-1</button>
      <Divider />
      <div className="ml-auto flex items-center">
        <Divider />
        <span className="w-[125px] pl-[10px] text-[14px] whitespace-nowrap [font-feature-settings:normal]">図形の個数：45</span>
        <Divider />
        <button aria-label="レイヤー" className="flex w-[68px] items-center gap-1 pl-[14px]">
          <Svg size={23} sw={1.4}><path d="M10 1.500l8.500 6.500-8.500 6.500L1.500 8z" /><path d="M2 12l8 6.500 8-6.500" /></Svg>
          <Caret />
        </button>
        <button className="flex w-[125px] items-center gap-[11px] text-[14px] whitespace-nowrap">
          <Svg size={19} sw={1.5}><path d="M6 1H1v5M14 1h5v5M6 19H1v-5M14 19h5v-5M6 5h5l3 3v7H6z" /></Svg>
          全画面モード
        </button>
        <button aria-label="再生" className="flex w-[35px] items-center">
          <Svg size={21} sw={1.4}><circle cx="10" cy="10" r="9" /><path d="M8 6v8l5-4z" /></Svg>
        </button>
        <Divider />
        <button aria-label="縮小" className="flex w-[40px] pl-[10px]"><Minus size={19} strokeWidth={1.5} /></button>
        <input
          type="range"
          aria-label="ズーム"
          value={zoom}
          onChange={(e) => setZoom(Number(e.target.value))}
          className="h-[3px] w-[120px] appearance-none rounded-full bg-[linear-gradient(to_right,#444_16%,#fff_16%)] [&::-webkit-slider-thumb]:size-[14px] [&::-webkit-slider-thumb]:appearance-none [&::-webkit-slider-thumb]:rounded-full [&::-webkit-slider-thumb]:border-2 [&::-webkit-slider-thumb]:border-[#444] [&::-webkit-slider-thumb]:bg-white"
        />
        <button aria-label="拡大" className="flex w-[40px] justify-center"><Plus size={19} strokeWidth={1.5} /></button>
        <label className="flex w-[73px] items-center pl-3">
          <select aria-label="ズーム倍率" className="w-[41px] appearance-none bg-transparent text-[14px] outline-none">
            <option>70%</option>
          </select>
          <Caret />
        </label>
        <Divider />
        <button aria-label="ページに合わせる" className="flex w-[58px] pl-[16px]">
          <Svg size={19} sw={1.6}><path d="M6 1H1v5M14 1h5v5M6 19H1v-5M14 19h5v-5M5.500 6.500h9v7h-9z" /></Svg>
        </button>
        <button aria-label="幅に合わせる" className="flex w-[41px]">
          <Svg size={19} sw={1.6}><path d="M1 1h18v18H1zM4 10h12M6.500 7.500L4 10l2.500 2.500M13.500 7.500L16 10l-2.500 2.500" /></Svg>
        </button>
      </div>
    </footer>
  );
};

// ドラッグ中のブロックと案内用の赤枠・矢印
const Annotations = () => (
  <>
    <svg width="57" height="33" viewBox="0 0 57 33" className="pointer-events-none absolute top-[719px] left-[267px]" aria-hidden="true">
      <path d="M1 1h55v31H1zM4 11.500h52M4 21.500h52" fill="#e6eaf6" stroke="#7ea3d4" strokeWidth="1.2" />
      <path d="M0 .5h4v32H0z" fill="#4d82bd" />
      <path d="M2 4.500v2M2 15v2M2 26v2" stroke="#fff" />
    </svg>
    <div className="pointer-events-none absolute top-[681px] left-[51px] h-[141px] w-[308px] border-[6px] border-[#e81c1c]" />
    <svg width="210" height="70" viewBox="0 0 210 70" fill="#ffff00" stroke="#444" strokeWidth="1" className="pointer-events-none absolute top-[660px] left-[370px]" aria-hidden="true">
      <path d="M8.200 43.500l4.300-.5 2.500 17-4.600.7z" />
      <path d="M16.400 42.300l6.800-1 3.200 17.400-7.100 1z" />
      <path d="M28.600 40.300L175.400 18l-2.500-13 22.800 18.300-16.100 23.400-2.500-12.400L31.800 57.300z" />
    </svg>
  </>
);

const App = () => (
  <div className="relative flex h-screen flex-col overflow-hidden bg-white font-['Open_Sans','Noto_Sans_CJK_JP',sans-serif] text-[#222] [font-feature-settings:'palt']">
    <TitleBar />
    <MenuBar />
    <Ribbon />
    <div className="flex min-h-0 flex-1">
      <LeftRail />
      <SymbolPanel />
      <Workspace />
      <RightRail />
    </div>
    <StatusBar />
    <Annotations />
  </div>
);

export default App;
